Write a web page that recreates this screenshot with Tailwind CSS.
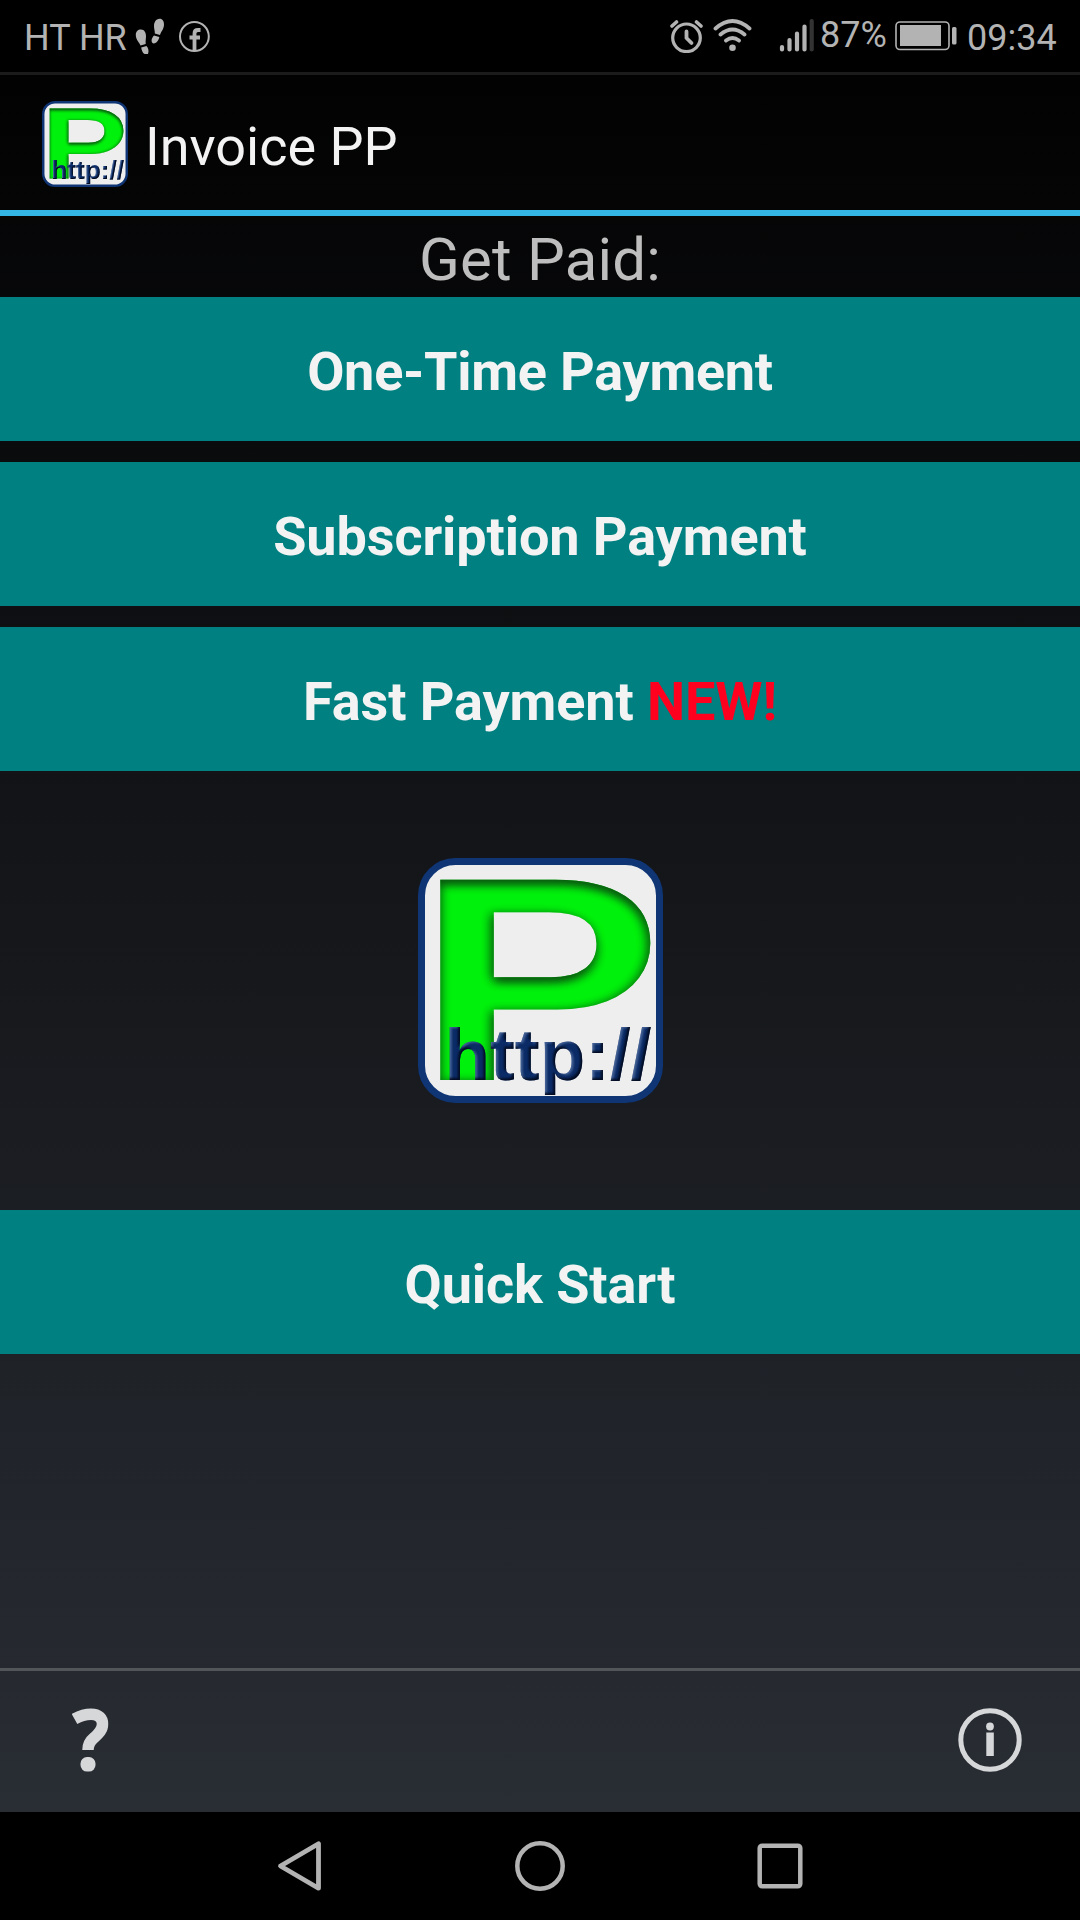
<!DOCTYPE html>
<html lang="en">
<head>
  <meta charset="UTF-8">
  <meta name="viewport" content="width=device-width, initial-scale=1.0">
  <title>Invoice PP</title>
  <script src="https://cdn.jsdelivr.net/npm/@tailwindcss/browser@4"></script>
</head>
<body class="bg-black font-['Roboto',sans-serif]">
  <!-- bevel filters for the app logo -->
  <svg class="absolute w-0 h-0">
    <defs>
      <filter id="bevelGreen" x="-10%" y="-10%" width="120%" height="120%" color-interpolation-filters="sRGB">
        <feComponentTransfer in="SourceAlpha" result="inv"><feFuncA type="linear" slope="-1" intercept="1" /></feComponentTransfer>
        <feGaussianBlur in="inv" stdDeviation="4" result="b1" />
        <feOffset in="b1" dx="0" dy="6" result="o1" />
        <feFlood flood-color="#0a5a10" flood-opacity="1" />
        <feComposite in2="o1" operator="in" />
        <feComposite in2="SourceAlpha" operator="in" result="s1" />
        <feOffset in="b1" dx="-2" dy="0" result="o2" />
        <feFlood flood-color="#0a5a10" flood-opacity="0.7" />
        <feComposite in2="o2" operator="in" />
        <feComposite in2="SourceAlpha" operator="in" result="s2" />
        <feMerge><feMergeNode in="SourceGraphic" /><feMergeNode in="s2" /><feMergeNode in="s1" /></feMerge>
      </filter>
      <filter id="bevelBlue" x="-10%" y="-20%" width="120%" height="140%" color-interpolation-filters="sRGB">
        <feComponentTransfer in="SourceAlpha" result="inv"><feFuncA type="linear" slope="-1" intercept="1" /></feComponentTransfer>
        <feGaussianBlur in="inv" stdDeviation="1.2" result="b" />
        <feOffset in="b" dx="-2" dy="-2" result="o2" />
        <feFlood flood-color="#010818" flood-opacity="0.9" />
        <feComposite in2="o2" operator="in" />
        <feComposite in2="SourceAlpha" operator="in" result="dark" />
        <feOffset in="b" dx="1.5" dy="1" result="o1" />
        <feFlood flood-color="#7f9cc8" flood-opacity="0.5" />
        <feComposite in2="o1" operator="in" />
        <feComposite in2="SourceAlpha" operator="in" result="light" />
        <feMerge><feMergeNode in="SourceGraphic" /><feMergeNode in="light" /><feMergeNode in="dark" /></feMerge>
      </filter>
    </defs>
  </svg>

  <div class="w-[1080px] h-[1920px] flex flex-col overflow-hidden">
    <main class="h-[1812px] flex flex-col bg-linear-to-b/srgb from-black to-[#292d34]">

      <!-- status bar -->
      <div class="h-[75px] shrink-0 flex items-start bg-black border-b-3 border-[#1b1b1b] text-[#b3b3b3] text-4xl leading-[42px] pl-6">
        <span class="mt-[17px] w-[111px] whitespace-nowrap">HT HR</span>
        <svg class="w-[30px] h-9 mt-[18px]" viewBox="0 0 30 36" fill="#b3b3b3">
          <path d="M6 11.500C9.500 11.500 11.200 15 11 18.500C10.900 21.500 10.400 23 10.700 26L5.500 27.500C4.500 24.500 .8 22 .8 17C.8 13.500 2.800 11.500 6 11.500Z" />
          <path d="M6.200 29.500L11.500 28C13.500 30 14 33 13 36L9.500 36C7.500 35 6.600 32 6.200 29.500Z" />
          <path d="M24.500 .8C27.700 .8 29 3.500 29 6.500C29 11 26 13.500 25 17L19.800 15.500C20 12.500 19 11.500 19 8C19 4.500 21 .8 24.500 .8Z" />
          <path d="M19 17.500L24.300 19C24 21.500 22 25 18.500 25.500C15.500 24.500 16.300 20 19 17.500Z" />
        </svg>
        <svg class="w-8 h-8 mt-5 ml-3.5" viewBox="0 0 32 32" fill="none" stroke="#b3b3b3">
          <circle cx="15.400" cy="16.500" r="14.400" stroke-width="2" />
          <path d="M15.500 30V13.500Q15.500 10 19 10H21.500M10.500 17.500H21" stroke-width="3.800" />
        </svg>

        <div class="ml-auto flex items-start">
          <svg class="w-[34px] h-[34px] mt-[19px]" viewBox="0 0 34 34" fill="none" stroke="#b3b3b3" stroke-linecap="round">
            <circle cx="16.500" cy="18.800" r="13.800" stroke-width="3.200" />
            <path d="M16.500 12.500V19L21.500 24" stroke-width="3.800" stroke-linejoin="round" />
            <path d="M2 7L6.500 3M31 7L26.500 3" stroke-width="3.600" />
          </svg>
          <svg class="w-10 h-[34px] mt-[18px] ml-[9px]" viewBox="0 0 40 34" fill="none" stroke="#b3b3b3" stroke-width="3.800" stroke-linecap="round">
            <path d="M2.500 10.500Q19.500 -4.500 36.500 10.500M7.500 16.500Q19.500 6.500 31.500 16.500M13 22.500Q19.500 17.500 26 22.500" />
            <circle cx="19.500" cy="29.800" r="3.300" fill="#b3b3b3" stroke="none" />
          </svg>
          <svg class="w-[36px] h-[34px] mt-[18px] ml-[26px]" viewBox="0 0 36 34" stroke="#b3b3b3" stroke-width="4.200" stroke-linecap="round">
            <path d="M3 29V31.400M10.500 22V31.400M18 15.500V31.400M25.500 8.500V31.400" />
            <path d="M32.700 3V31.400" stroke="#333" />
          </svg>
          <span class="mt-3.5 ml-[5px] w-[75px] whitespace-nowrap">87%</span>
          <svg class="w-[62px] h-[30px] mt-[21px]" viewBox="0 0 62 30">
            <rect x="1" y="1" width="53" height="27.500" rx="4" fill="none" stroke="#b3b3b3" stroke-width="1.600" />
            <rect x="5" y="4" width="41" height="21" fill="#b3b3b3" />
            <rect x="57" y="6" width="4.500" height="17.500" rx="1.500" fill="#b3b3b3" />
          </svg>
          <span class="mt-[17px] ml-2.5 w-[113px] whitespace-nowrap">09:34</span>
        </div>
      </div>

      <!-- action bar -->
      <header class="h-[141px] shrink-0 flex items-center border-b-6 border-[#33b5e5] pl-[42px] text-[#f3f3f3]">
        <svg class="w-[86px] h-[86px] mt-0.5 overflow-visible" viewBox="0 0 245 245">
          <rect x="3.500" y="3.500" width="238" height="238" rx="34" fill="#eee" stroke="#0f3575" stroke-width="7" />
          <text transform="translate(-2.500 222) scale(1.275 1)" font-family="Liberation Sans" font-weight="700" font-size="291" fill="#00f20c" filter="url(#bevelGreen)">P</text>
          <text x="26.500" y="222" textLength="207" lengthAdjust="spacingAndGlyphs" font-family="Liberation Sans" font-weight="700" font-size="73" fill="#0b2b66" filter="url(#bevelBlue)">http://</text>
        </svg>
        <h1 class="mt-[9px] ml-[17px] text-[54px] leading-16">Invoice PP</h1>
      </header>

      <p class="h-[81px] shrink-0 text-center text-[60px] leading-[88px] tracking-[0.2px] text-[#bebebe]">Get Paid:</p>

      <div class="flex flex-col gap-[21px] text-[54px] font-bold text-[#f3f3f3]">
        <button class="h-36 bg-[#008080] pt-1 tracking-[-0.25px]">One-Time Payment</button>
        <button class="h-36 bg-[#008080] pt-1 tracking-[-0.1px]">Subscription Payment</button>
        <button class="h-36 bg-[#008080] pt-1 tracking-[-0.1px]">Fast Payment <span class="text-[#ff001e]">NEW!</span></button>
      </div>

      <div class="h-[439px] shrink-0 flex justify-center pt-[87px]">
        <svg class="w-[245px] h-[245px] overflow-visible" viewBox="0 0 245 245">
          <rect x="3.500" y="3.500" width="238" height="238" rx="34" fill="#eee" stroke="#0f3575" stroke-width="7" />
          <text transform="translate(-2.500 222) scale(1.275 1)" font-family="Liberation Sans" font-weight="700" font-size="291" fill="#00f20c" filter="url(#bevelGreen)">P</text>
          <text x="26.500" y="222" textLength="207" lengthAdjust="spacingAndGlyphs" font-family="Liberation Sans" font-weight="700" font-size="73" fill="#0b2b66" filter="url(#bevelBlue)">http://</text>
        </svg>
      </div>

      <button class="h-36 shrink-0 bg-[#008080] pt-1 text-[54px] font-bold tracking-[-0.1px] text-[#f3f3f3]">Quick Start</button>

      <!-- bottom bar -->
      <footer class="mt-auto h-36 shrink-0 flex justify-between border-t-3 border-[#525659] pl-[72px] pr-[58px] pt-[37px]">
        <svg class="w-[38px] h-16" viewBox="0 0 38 64">
          <path d="M2.500 11Q11 6.300 19 6.300C27 6.300 30.500 10.500 30.500 16C30.500 22 27 25.500 22 29.800C17.500 33.500 16 36.500 16 42" fill="none" stroke="#d6d7d9" stroke-width="11.500" />
          <rect x="8.500" y="49" width="15" height="14.600" rx="6.500" fill="#d6d7d9" />
        </svg>
        <svg class="w-16 h-16" viewBox="0 0 64 64">
          <circle cx="32" cy="32" r="29.200" fill="none" stroke="#d6d7d9" stroke-width="5" />
          <circle cx="32" cy="18.500" r="3.900" fill="#d6d7d9" />
          <rect x="28.300" y="24.500" width="7.500" height="23.500" fill="#d6d7d9" />
        </svg>
      </footer>
    </main>

    <!-- system navigation -->
    <nav class="h-[108px] shrink-0 grid grid-cols-[240px_240px_240px] justify-center items-center justify-items-center">
      <svg class="w-[52px] h-[52px]" viewBox="0 0 52 52" fill="none" stroke="#b3b3b3" stroke-width="4.800" stroke-linejoin="round">
        <path d="M6.500 26L44.500 3.800V48.200Z" />
      </svg>
      <svg class="w-[52px] h-[52px]" viewBox="0 0 52 52" fill="none" stroke="#b3b3b3" stroke-width="4.500">
        <circle cx="26" cy="26" r="22.700" />
      </svg>
      <svg class="w-[52px] h-[52px]" viewBox="0 0 52 52" fill="none" stroke="#b3b3b3" stroke-width="4.500">
        <rect x="5.700" y="5.700" width="40.600" height="40.600" rx="2.500" />
      </svg>
    </nav>
  </div>
</body>
</html>
